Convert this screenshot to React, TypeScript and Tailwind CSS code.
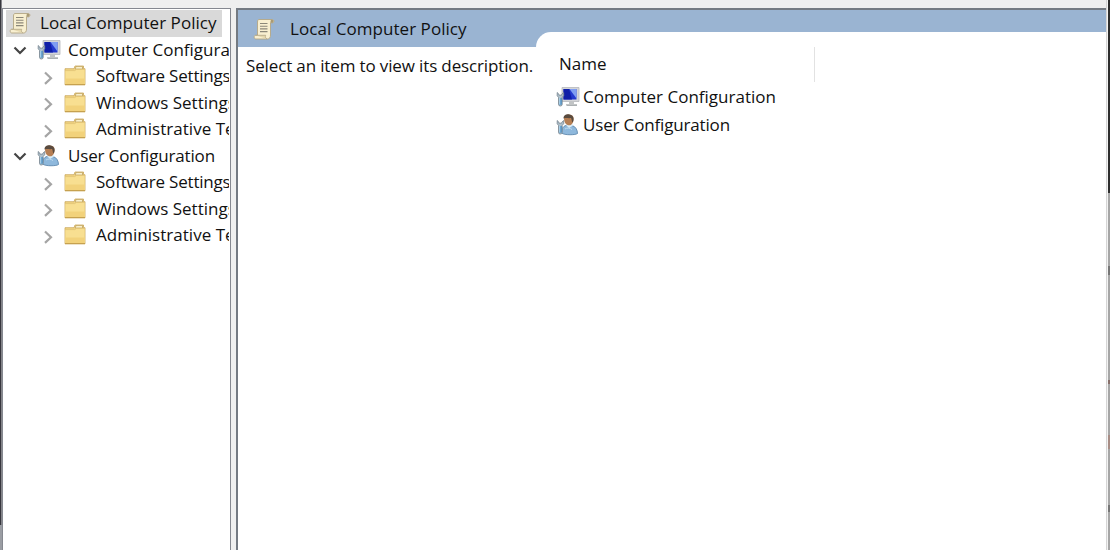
import React from "react";

function Scroll() {
  return (
    <svg width="22" height="22" viewBox="0 0 22 22" className="shrink-0">
      <path d="M6 1.500h13.200c2 0 2.300 3 .4 3.300h-2.100V17c0 2.500-1 4-3 4H2.800C.8 21 .6 17.500 2.500 17.300H4.500V4C4.500 2.500 5 1.500 6 1.500Z" fill="#f8efd0" stroke="#b3a684" strokeWidth=".9" />
      <path d="M2.500 17.300h10.200c-.8 1.500 0 3.300 1.400 3.700" fill="#e5d8ae" stroke="#b3a684" strokeWidth=".8" />
      <path d="M17.500 4.800V3.200c0-1.700 3-2 3 .1 0 1.200-.8 1.500-1.600 1.500Z" fill="#a99a74" />
      <path d="M7 5.500h7.500M7 8.200h7.500M7 10.900h7.500M7 13.600h7.500" stroke="#8b8779" strokeWidth="1.100" />
    </svg>
  );
}

function Wrench() {
  return (
    <>
      <path d="M1.200 6.500v3.300l1.300 1.500v7.200c0 2 3.700 2 3.700 0v-7.200l1.500-1.500V6.500L5.800 8.200v1H2.900v-1Z" fill="#b0c2ce" stroke="#75838e" strokeWidth=".8" />
      <path d="M3 12h2.700v6.700H3Z" fill="#4387bd" />
      <path d="M3.800 12v6.500" stroke="#d2edfa" strokeWidth="1" />
    </>
  );
}

function Computer() {
  return (
    <svg width="24" height="22" viewBox="0 0 24 22" className="shrink-0">
      <path d="M6 1.500h17v14H6Z" fill="#d4d5d8" stroke="#b5b7bc" strokeWidth=".8" />
      <path d="M7.500 3h13v10.500h-13Z" fill="#2439ce" />
      <path d="M7.500 3h5.500l3 10.500H7.500Z" fill="#101fa7" />
      <path d="M13.500 3h7v9.500Z" fill="#7f9df2" />
      <path d="M13 15.500h5v2.500h3v1.800H10V18h3Z" fill="#c1c4c5" />
      <path d="M11 19.500h10" stroke="#a1a7aa" strokeWidth=".8" />
      <Wrench />
    </svg>
  );
}

function User() {
  return (
    <svg width="24" height="22" viewBox="0 0 24 22" className="shrink-0">
      <path d="M5.500 19c0-5 2-7.500 6.500-8l4 .5c3.500.8 5.500 4.500 5.500 8-1.500 1.500-13 2-16-.5Z" fill="#8eb8dc" stroke="#547fa6" strokeWidth=".8" />
      <path d="m10 11 3 3 4-2.500-1-2.500h-5Z" fill="#d9edf8" />
      <path d="M8 4.500c0-5 9-5.500 9.500-.7.400 4.200-1.500 7.500-4.500 7.500-2.700 0-5-2.500-5-6.800Z" fill="#b67f54" />
      <path d="M7.500 4.500C7.500.5 11 0 13.500.5c4.500.8 5 5.200 3 8-.8-.7-.7-3.500-1.500-4.500C12.500 4.500 10 3.500 7.500 4.500Z" fill="#594b3f" />
      <path d="M9 15c2-1.500 5-1 7 .5" stroke="#c0dcf0" fill="none" />
      <Wrench />
    </svg>
  );
}

function Folder() {
  return (
    <svg width="22" height="21" viewBox="0 0 22 21" className="shrink-0">
      <path d="M1 3.700h9l1-2.700h8.500v2.700h1.500v16.100H1Z" fill="#f1d483" stroke="#c9a75c" strokeWidth=".8" />
      <path d="M12 1.600h6.500v2.400h-7.300Z" fill="#fff7d6" stroke="#b99b57" strokeWidth=".7" />
      <path d="M1.400 5.800h9.300l1.700-1.300h8.200v14.800H1.400Z" fill="#f8df91" />
      <path d="M1.500 13.500h19v5.700h-19Z" fill="#f2d27b" />
      <path d="M1.500 5.600h9.300l1.700-1.200h8" stroke="#e0c274" strokeWidth=".7" fill="none" />
      <path d="M1 19.600h20" stroke="#c39d4b" />
    </svg>
  );
}

function Chevron({ open = false }: { open?: boolean }) {
  return (
    <svg width="14" height="14" viewBox="0 0 14 14" className="shrink-0">
      <path d={open ? "m1.500 4.500 5.500 5.500 5.500-5.500" : "m4 1.500 6 5.700-6 5.700"} fill="none" stroke={open ? "#454545" : "#a5a5a5"} strokeWidth="2.200" />
    </svg>
  );
}

const policies = [
  { label: "Software Settings", spacing: "tracking-[-0.2px]" },
  { label: "Windows Settings", spacing: "tracking-[0px]" },
  { label: "Administrative Templates", spacing: "tracking-[0.03px]" },
];

function Group({ name, icon, spacing }: { name: string; icon: React.ReactNode; spacing: string }) {
  return (
    <>
      <div className="flex h-[26.5px] items-center pl-[10px]">
        <Chevron open />
        <span className="ml-[10px] flex">{icon}</span>
        <span className={`ml-[7px] ${spacing}`}>{name}</span>
      </div>
      {policies.map((item) => (
        <div key={item.label} className="flex h-[26.5px] items-center pl-[38px]">
          <span className="mt-[3px] flex"><Chevron /></span>
          <span className="mb-px ml-[9px] flex"><Folder /></span>
          <span className={`ml-[10px] ${item.spacing}`}>{item.label}</span>
        </div>
      ))}
    </>
  );
}

export default function App() {
  return (
    <div className="flex h-[550px] w-[1110px] overflow-hidden bg-[#efefef] font-['Open_Sans','Noto_Sans',sans-serif] text-[17px] leading-[26px] whitespace-nowrap text-[#111]">
      <div className="flex w-[2px] shrink-0 flex-col">
        <div className="h-[525px] border-r border-[#85858a] bg-[#37373e]" />
        <div className="flex-1 bg-[#9a9da3]" />
      </div>
      <aside className="mt-[8px] w-[229px] shrink-0 overflow-hidden border border-b-0 border-[#858890] bg-white">
        <div className="w-[226px] overflow-hidden pt-px">
          <div className="ml-[3px] flex h-[26.5px] w-[216px] items-center bg-[#d9d9d9] pl-[3px]">
            <Scroll />
            <span className="mb-px ml-[9px] tracking-[0.05px]">Local Computer Policy</span>
          </div>
          <Group name="Computer Configuration" icon={<Computer />} spacing="tracking-[0px]" />
          <Group name="User Configuration" icon={<User />} spacing="tracking-[-0.16px]" />
        </div>
      </aside>
      <main className="mt-[8px] ml-[5px] flex w-[870px] shrink-0 flex-col border-t-2 border-l-2 border-[#747a82] bg-white">
        <header className="flex h-[37px] shrink-0 bg-[#9ab4d2]">
          <div className="flex w-[298px] items-center pl-[15px]">
            <Scroll />
            <span className="ml-[15px] tracking-[0.05px]">Local Computer Policy</span>
          </div>
          <div className="mt-[22px] flex-1 rounded-tl-[15px] bg-white" />
        </header>
        <div className="flex flex-1">
          <p className="w-[318px] pt-[6px] pl-[8px] tracking-[-0.14px]">Select an item to view its description.</p>
          <section>
            <div className="flex h-[35px] w-[259px] items-center border-r border-[#e2e2e2] pb-[2px] pl-[3px]">Name</div>
            <div className="mt-px flex h-[28px] items-center"><Computer /><span className="ml-[3px]">Computer Configuration</span></div>
            <div className="flex h-[28px] items-center"><User /><span className="ml-[3px] tracking-[-0.16px]">User Configuration</span></div>
          </section>
        </div>
      </main>
      <div className="flex-1 border-l border-[#d5d5d5] bg-[#f3f3f3]" />
      <div className="flex w-[2px] shrink-0 flex-col bg-[#a6a6a6]">
        <div className="h-[193px] bg-[#2e2e2e]" />
        <div className="h-[73px]" /><div className="h-[9px] bg-[#777]" />
        <div className="h-[105px]" /><div className="h-[4px] bg-[#88706b]" />
        <div className="h-[51px]" /><div className="h-[14px] bg-[#a88d85]" />
        <div className="h-[56px]" /><div className="h-[7px] bg-[#777]" />
      </div>
    </div>
  );
}
